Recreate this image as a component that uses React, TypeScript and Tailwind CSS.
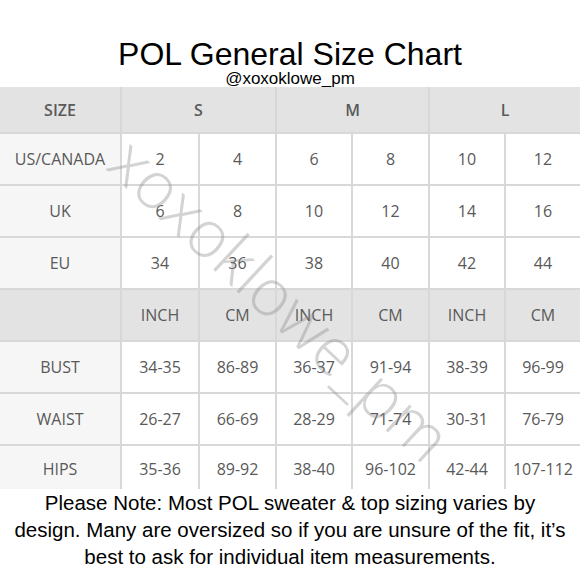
import React from "react";

const cell = "flex items-center justify-center bg-white text-[16px] text-[#595959]";
const first = "flex items-center justify-center bg-[#f6f6f6] text-[16px] text-[#595959]";
const head = "flex items-center justify-center bg-[#e3e3e3] text-[16px] text-[#5a5a5a]";

const sizeRows: [string, string[]][] = [
  ["US/CANADA", ["2", "4", "6", "8", "10", "12"]],
  ["UK", ["6", "8", "10", "12", "14", "16"]],
  ["EU", ["34", "36", "38", "40", "42", "44"]],
];

const measRows: [string, string[]][] = [
  ["BUST", ["34-35", "86-89", "36-37", "91-94", "38-39", "96-99"]],
  ["WAIST", ["26-27", "66-69", "28-29", "71-74", "30-31", "76-79"]],
  ["HIPS", ["35-36", "89-92", "38-40", "96-102", "42-44", "107-112"]],
];

export default function App() {
  return (
    <div className="relative w-[580px] h-[580px] overflow-hidden bg-white" style={{ fontFamily: "'Liberation Sans', Arial, sans-serif" }}>
      <div className="flex flex-col items-center pt-[38px]">
        <div className="text-[32px] leading-[32px] text-black">POL General Size Chart</div>
        <div className="text-[17px] leading-[17px] text-black">@xoxoklowe_pm</div>
      </div>
      <div
        className="grid w-[580px] grid-cols-[120px_76px_75px_74px_75px_74px_1fr] grid-rows-[45px_50px_50px_50px_50px_50px_50px_46px] gap-[2px] bg-[#d8d8d8]"
        style={{ fontFamily: "'Open Sans', sans-serif" }}
      >
        <div className={head + " font-semibold"}>SIZE</div>
        <div className={head + " col-span-2 font-semibold"}>S</div>
        <div className={head + " col-span-2 font-semibold"}>M</div>
        <div className={head + " col-span-2 font-semibold"}>L</div>
        {sizeRows.map(([label, vals]) => (
          <React.Fragment key={label}>
            <div className={first}>{label}</div>
            {vals.map((v, i) => (
              <div key={i} className={cell}>{v}</div>
            ))}
          </React.Fragment>
        ))}
        <div className={head}></div>
        {["INCH", "CM", "INCH", "CM", "INCH", "CM"].map((v, i) => (
          <div key={i} className={head}>{v}</div>
        ))}
        {measRows.map(([label, vals]) => (
          <React.Fragment key={label}>
            <div className={first}>{label}</div>
            {vals.map((v, i) => (
              <div key={i} className={cell}>{v}</div>
            ))}
          </React.Fragment>
        ))}
      </div>
      <div className="relative -mt-[3px] bg-white text-center text-[20.5px] leading-[27px] text-black">
        Please Note: Most POL sweater &amp; top sizing varies by
        <br />
        design. Many are oversized so if you are unsure of the fit, it’s
        <br />
        best to ask for individual item measurements.
      </div>
      <div
        className="pointer-events-none absolute left-[282px] top-[298px] -translate-x-1/2 -translate-y-1/2 rotate-[43deg] whitespace-nowrap text-[66px] leading-none font-light text-[rgba(140,140,140,0.38)]"
        style={{ fontFamily: "'Open Sans', sans-serif" }}
      >
        xoxoklowe_pm
      </div>
    </div>
  );
}
